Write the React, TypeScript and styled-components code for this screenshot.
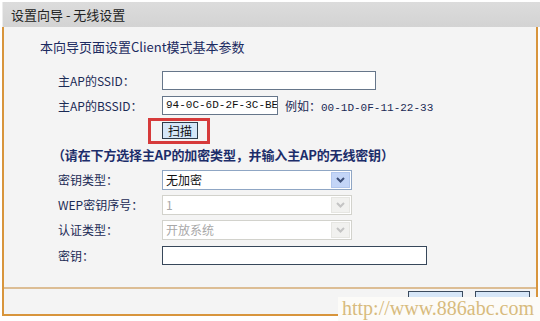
import React from "react";
import styled, { createGlobalStyle } from "styled-components";

const GlobalStyle = createGlobalStyle`
  body {
    margin: 0;
    background: #ffffff;
    font-family: "Noto Sans CJK SC", "Liberation Sans", sans-serif;
  }
`;

const Window = styled.div`
  position: relative;
  width: 540px;
  height: 321px;
  padding: 2px 0 0 2px;
  box-sizing: border-box;
  overflow: hidden;
`;

const TitleBar = styled.div`
  height: 25px;
  line-height: 25px;
  padding-left: 8px;
  background: linear-gradient(to bottom, #dcdcdc, #d3d3d3);
  border-left: 1px solid #ececec;
  font-size: 13px;
  color: #222;
`;

const Panel = styled.div`
  width: 536px;
  box-sizing: border-box;
  border: 2px solid #d8953c;
  border-top: none;
  background: #f4f4f4;
`;

const Body = styled.div`
  height: 262px;
  box-sizing: border-box;
  padding: 10px 0 0 36px;
  border-bottom: 2px solid #dcbd94;
`;

const Heading = styled.div`
  height: 20px;
  line-height: 20px;
  font-size: 13px;
  color: #1b2a60;
  margin-bottom: 11px;
`;

const Form = styled.div`
  display: grid;
  grid-template-columns: 104px 1fr;
  padding-left: 18px;
`;

const Row = styled.div<{ $h?: number }>`
  display: contents;
  & > * {
    height: ${(p) => p.$h ?? 25}px;
  }
`;

const Label = styled.div`
  display: flex;
  align-items: center;
  font-size: 12px;
  color: #1b2a55;
`;

const Cell = styled.div`
  display: flex;
  align-items: center;
  gap: 7px;
`;

const Note = styled.div`
  grid-column: 1 / 3;
  display: flex;
  align-items: center;
  margin-left: -6px;
  font-size: 13px;
  font-weight: bold;
  letter-spacing: -0.15px;
  color: #1c2d6a;
`;

const TextBox = styled.div<{ $w: number; $dark?: boolean }>`
  width: ${(p) => p.$w}px;
  height: 19px;
  box-sizing: border-box;
  background: #fff;
  border: 1px solid ${(p) => (p.$dark ? "#37475a" : "#66768a")};
  overflow: hidden;
  white-space: nowrap;
  font-family: "Liberation Mono", monospace;
  font-size: 11px;
  line-height: 17px;
  padding-left: 3px;
  color: #111;
`;

const Mono = styled.span`
  font-family: "Liberation Mono", monospace;
  font-size: 11px;
`;

const Example = styled.span`
  font-size: 12px;
  color: #1b2a55;
`;

const ScanWrap = styled.div`
  position: relative;
  display: flex;
`;

const ScanButton = styled.div`
  width: 36px;
  height: 17px;
  box-sizing: border-box;
  background: #d5e6f7;
  border: 1px solid #2d3a48;
  font-size: 12px;
  line-height: 15px;
  text-align: center;
  color: #111;
`;

const Highlight = styled.div`
  position: absolute;
  left: -14px;
  top: -4px;
  width: 62px;
  height: 26px;
  box-sizing: border-box;
  border: 3px solid #d63a3a;
`;

const Select = styled.div<{ $disabled?: boolean }>`
  width: 190px;
  height: 20px;
  box-sizing: border-box;
  display: flex;
  align-items: stretch;
  background: #fff;
  border: 1px solid ${(p) => (p.$disabled ? "#d2d2cc" : "#8fa6c4")};
  font-size: 12px;
  color: ${(p) => (p.$disabled ? "#a8a8a8" : "#111")};
`;

const SelectValue = styled.div`
  flex: 1;
  padding-left: 3px;
  line-height: 18px;
`;

const Arrow = styled.div<{ $disabled?: boolean }>`
  width: 17px;
  margin: 1px;
  display: flex;
  align-items: center;
  justify-content: center;
  background: ${(p) => (p.$disabled ? "#f1f1ef" : "#c3d5f7")};
  border: 1px solid ${(p) => (p.$disabled ? "#e6e6e2" : "#b1c6ec")};
`;

const Footer = styled.div`
  height: 25px;
  display: flex;
  justify-content: flex-end;
  align-items: flex-start;
  gap: 12px;
  padding: 2px 6px 0 0;
  box-sizing: border-box;
`;

/* labels of these two buttons are hidden under the watermark in the shot */
const FooterButton = styled.div`
  width: 55px;
  height: 22px;
  box-sizing: border-box;
  background: #d6e6f7;
  border: 1px solid #3b4b5e;
`;

const Watermark = styled.div`
  position: absolute;
  left: 338px;
  top: 297px;
  width: 202px;
  height: 24px;
  background: #fcfbf8;
  font-family: "Liberation Serif", serif;
  font-size: 20px;
  line-height: 22px;
  padding-left: 4px;
  box-sizing: border-box;
  color: #d8bb7e;
`;

const Chevron = ({ disabled }: { disabled?: boolean }) => (
  <svg width="9" height="6" viewBox="0 0 9 6">
    <path
      d="M1 1 L4.5 4.5 L8 1"
      fill="none"
      stroke={disabled ? "#c4c4c4" : "#3d4f78"}
      strokeWidth="2"
    />
  </svg>
);

const Dropdown = ({ value, disabled }: { value: string; disabled?: boolean }) => (
  <Select $disabled={disabled}>
    <SelectValue>{value}</SelectValue>
    <Arrow $disabled={disabled}>
      <Chevron disabled={disabled} />
    </Arrow>
  </Select>
);

export default function App() {
  return (
    <Window>
      <GlobalStyle />
      <TitleBar>设置向导 - 无线设置</TitleBar>
      <Panel>
        <Body>
          <Heading>本向导页面设置Client模式基本参数</Heading>
          <Form>
            <Row>
              <Label>主AP的SSID：</Label>
              <Cell>
                <TextBox $w={214} />
              </Cell>
            </Row>
            <Row>
              <Label>主AP的BSSID：</Label>
              <Cell>
                <TextBox $w={116}>94-0C-6D-2F-3C-BE</TextBox>
                <Example>
                  例如：<Mono>00-1D-0F-11-22-33</Mono>
                </Example>
              </Cell>
            </Row>
            <Row $h={24}>
              <Label />
              <Cell>
                <ScanWrap>
                  <ScanButton>扫描</ScanButton>
                  <Highlight />
                </ScanWrap>
              </Cell>
            </Row>
            <Row>
              <Note>（请在下方选择主AP的加密类型，并输入主AP的无线密钥）</Note>
            </Row>
            <Row>
              <Label>密钥类型：</Label>
              <Cell>
                <Dropdown value="无加密" />
              </Cell>
            </Row>
            <Row>
              <Label>WEP密钥序号：</Label>
              <Cell>
                <Dropdown value="1" disabled />
              </Cell>
            </Row>
            <Row>
              <Label>认证类型：</Label>
              <Cell>
                <Dropdown value="开放系统" disabled />
              </Cell>
            </Row>
            <Row $h={26}>
              <Label>密钥：</Label>
              <Cell>
                <TextBox $w={265} $dark />
              </Cell>
            </Row>
          </Form>
        </Body>
        <Footer>
          <FooterButton />
          <FooterButton />
        </Footer>
      </Panel>
      <Watermark>http://www.886abc.com</Watermark>
    </Window>
  );
}
